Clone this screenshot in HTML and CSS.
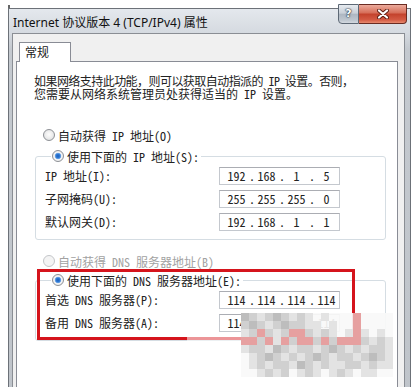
FILE: index.html
```html
<!DOCTYPE html>
<html>
<head>
<meta charset="utf-8">
<link rel="stylesheet" href="styles.css">
</head>
<body>
<div class="mark"></div>
<div class="window">
  <div class="titlebar"><span class="title">Internet 协议版本 4 (TCP/IPv4) 属性</span></div>
  <div class="caps">
    <div class="help">?</div>
    <div class="close"><svg width="12" height="10" viewBox="0 0 12 10"><path d="M2 1.5 L10 8.5 M10 1.5 L2 8.5" stroke="#5a1c12" stroke-width="4" stroke-linecap="round"/><path d="M2 1.5 L10 8.5 M10 1.5 L2 8.5" stroke="#fff" stroke-width="2.2" stroke-linecap="round"/></svg></div>
  </div>
  <div class="client">
    <div class="tab">常规</div>
    <div class="panel">
      <div class="desc">
        <div class="line tight">如果网络支持此功能，则可以获取自动指派的 IP 设置。否则，</div>
        <div class="line">您需要从网络系统管理员处获得适当的 IP 设置。</div>
      </div>
      <div class="opt first"><span class="radio"></span><span>自动获得 IP 地址(O)</span></div>
      <fieldset class="group g1">
        <legend class="opt"><span class="radio on"></span><span>使用下面的 IP 地址(S):</span></legend>
        <div class="row"><span class="lbl">IP 地址(I):</span><div class="ip"><span class="f">192</span><span class="dot">.</span><span class="f">168</span><span class="dot">.</span><span class="f">1</span><span class="dot">.</span><span class="f">5</span></div></div>
        <div class="row"><span class="lbl">子网掩码(U):</span><div class="ip"><span class="f">255</span><span class="dot">.</span><span class="f">255</span><span class="dot">.</span><span class="f">255</span><span class="dot">.</span><span class="f">0</span></div></div>
        <div class="row"><span class="lbl">默认网关(D):</span><div class="ip"><span class="f">192</span><span class="dot">.</span><span class="f">168</span><span class="dot">.</span><span class="f">1</span><span class="dot">.</span><span class="f">1</span></div></div>
      </fieldset>
      <div class="opt off"><span class="radio"></span><span>自动获得 DNS 服务器地址(B)</span></div>
      <fieldset class="group g2">
        <legend class="opt"><span class="radio on"></span><span>使用下面的 DNS 服务器地址(E):</span></legend>
        <div class="row"><span class="lbl">首选 DNS 服务器(P):</span><div class="ip"><span class="f">114</span><span class="dot">.</span><span class="f">114</span><span class="dot">.</span><span class="f">114</span><span class="dot">.</span><span class="f">114</span></div></div>
        <div class="row"><span class="lbl">备用 DNS 服务器(A):</span><div class="ip"><span class="f">114</span><span class="dot">.</span><span class="f">114</span><span class="dot">.</span><span class="f">114</span><span class="dot">.</span><span class="f">114</span></div></div>
      </fieldset>
    </div>
  </div>
</div>
<div class="redbox"></div>
<div class="blur"></div>
<div class="mosaic">
<i class="d"></i><i class="m"></i><i class="l"></i><i class="m"></i><i class="d"></i><i class="m"></i><i class="l"></i><i class="m"></i><i class="l"></i><i></i><i class="l"></i><i></i><i></i><i></i><i class="p"></i><i></i><i></i><i></i><i></i>
<i class="m"></i><i class="d"></i><i class="m"></i><i class="l"></i><i class="m"></i><i class="d"></i><i class="m"></i><i class="m"></i><i class="l"></i><i class="l"></i><i></i><i class="l"></i><i></i><i></i><i class="p"></i><i></i><i></i><i></i><i></i>
<i class="l"></i><i class="m"></i><i class="p"></i><i class="m"></i><i class="l"></i><i class="m"></i><i class="p"></i><i class="p"></i><i class="m"></i><i class="l"></i><i class="m"></i><i class="l"></i><i></i><i class="l"></i><i class="p"></i><i class="l"></i><i></i><i class="l"></i><i></i>
<i class="p"></i><i class="p"></i><i class="m"></i><i class="p"></i><i class="l"></i><i class="p"></i><i class="m"></i><i class="p"></i><i class="p"></i><i class="m"></i><i class="p"></i><i class="m"></i><i class="p"></i><i class="p"></i><i class="p"></i><i class="m"></i><i class="l"></i><i class="m"></i><i class="l"></i>
<i class="l"></i><i class="m"></i><i class="m"></i><i class="l"></i><i class="d"></i><i class="m"></i><i class="l"></i><i class="m"></i><i class="m"></i><i class="l"></i><i class="m"></i><i class="d"></i><i class="m"></i><i class="l"></i><i class="m"></i><i class="l"></i><i class="m"></i><i class="m"></i><i class="l"></i>
<i></i><i class="l"></i><i class="m"></i><i class="d"></i><i class="m"></i><i class="l"></i><i class="m"></i><i class="l"></i><i class="m"></i><i class="d"></i><i class="m"></i><i class="l"></i><i class="m"></i><i class="m"></i><i class="l"></i><i class="m"></i><i class="d"></i><i class="m"></i><i class="l"></i>
<i></i><i class="l"></i><i class="m"></i><i class="l"></i><i class="m"></i><i class="m"></i><i class="l"></i><i class="d"></i><i class="m"></i><i class="l"></i><i class="m"></i><i class="l"></i><i class="l"></i><i class="m"></i><i class="m"></i><i class="l"></i><i class="m"></i><i class="l"></i><i class="l"></i>
<i></i><i></i><i class="l"></i><i class="m"></i><i class="l"></i><i class="m"></i><i></i><i class="l"></i><i class="m"></i><i class="l"></i><i></i><i class="l"></i><i class="m"></i><i class="l"></i><i></i><i class="l"></i><i class="l"></i><i></i><i></i>
</div>
</body>
</html>
```

FILE: styles.css
```css
* { box-sizing: border-box; }
html, body { margin: 0; padding: 0; }
body {
  width: 419px;
  height: 387px;
  overflow: hidden;
  position: relative;
  background: #fff;
  font-family: "Noto Sans Mono CJK SC", "Noto Sans CJK SC", sans-serif;
  font-size: 12px;
  color: #222;
}
.mark {
  position: absolute;
  left: 8px;
  top: 5px;
  width: 2px;
  height: 3px;
  background: #666;
}
.window {
  position: relative;
  margin: 8px 0 0 8px;
  width: 403px;
  height: 400px;
  border: 1px solid #6c7178;
  border-bottom: none;
  background: linear-gradient(#e4e8ed, #d5dae0 24px, #c4c9cf 40px, #bfc4ca);
  padding: 0 5px 0 3px;
  display: flex;
  flex-direction: column;
}
.titlebar {
  height: 24px;
  display: flex;
  align-items: center;
  padding-left: 1px;
  padding-top: 2px;
}
.title {
  font-family: "Noto Sans", "Noto Sans CJK SC", sans-serif;
  font-size: 12px;
  color: #111;
}
.caps {
  position: absolute;
  right: 3px;
  top: -5px;
  display: flex;
}
.help {
  width: 21px;
  height: 20px;
  border: 1px solid #5d6875;
  border-radius: 0 0 0 4px;
  background: linear-gradient(#e6eaef, #c9d0d8 45%, #aeb7c2 52%, #bfc7d0 85%, #d3d9e0);
  color: #fff;
  font-family: "DejaVu Sans", sans-serif;
  font-weight: bold;
  font-size: 11px;
  line-height: 18px;
  text-align: center;
  text-shadow: 0 0 1px #2b3540, 0 0 1px #2b3540, 0 0 2px #2b3540;
}
.close {
  width: 48px;
  height: 20px;
  border: 1px solid #6a2b22;
  border-left: none;
  border-radius: 0 0 4px 0;
  background: linear-gradient(#ecab9c, #d7705b 42%, #c4432d 52%, #d35a43 82%, #e88a6f);
  display: flex;
  align-items: center;
  justify-content: center;
}
.close svg { display: block; }
.client {
  flex: 1;
  display: flex;
  flex-direction: column;
  border: 1px solid #8a8e94;
  border-bottom: none;
  background: #f0f0f0;
  padding: 8px 6px 0 3px;
}
.tab {
  position: relative;
  z-index: 1;
  align-self: flex-start;
  margin-left: 3px;
  margin-bottom: -1px;
  width: 52px;
  height: 20px;
  border: 1px solid #898c95;
  border-bottom: none;
  background: #fff;
  padding-left: 5px;
  line-height: 18px;
}
.panel {
  flex: 1;
  border: 1px solid #898c95;
  border-bottom: none;
  background: #fff;
  padding-top: 12px;
}
.desc {
  margin: 0 0 0 17px;
  white-space: nowrap;
}
.line {
  height: 13px;
  line-height: 13px;
}
.line.tight { letter-spacing: -0.55px; }
.opt {
  display: flex;
  align-items: center;
  gap: 3px;
  height: 16px;
  white-space: nowrap;
}
.opt.first { margin: 27px 0 0 26px; }
.opt.off { margin: 13px 0 0 26px; color: #a2a2a2; }
.radio {
  width: 12px;
  height: 12px;
  border-radius: 50%;
  border: 1px solid #8d9095;
  background: radial-gradient(circle at 50% 45%, #fdfdfd 0, #f0f0f0 40%, #d6d8db 100%);
  flex: none;
}
.radio.on {
  background: radial-gradient(circle at 50% 50%, #1d5fb8 0, #2f7ad6 2px, #7fb0e8 3px, #f5f5f5 3.6px, #e0e2e5 100%);
}
.opt.off .radio {
  border-color: #c4c6c9;
  background: #f4f4f4;
}
.group {
  margin: 5px 0 0 18px;
  padding: 0 0 6px 9px;
  width: 351px;
  min-width: 0;
  border: 1px solid #d5dde3;
  border-radius: 3px;
}
.group.g2 { margin-top: 3px; }
.group legend {
  margin-left: 6px;
  padding: 0 2px 0 1px;
}
.row {
  display: flex;
  align-items: center;
  height: 23px;
  white-space: nowrap;
}
.lbl { width: 174px; }
.ip {
  display: flex;
  align-items: center;
  width: 121px;
  height: 18px;
  border: 1px solid #c4c8ce;
  border-top-color: #abadb3;
  padding-left: 4px;
  background: #fff;
  color: #222;
}
.f { width: 25px; text-align: center; }
.dot { width: 5px; text-align: center; }
.redbox {
  position: absolute;
  left: 37px;
  top: 269px;
  width: 318px;
  height: 71px;
  border: 3px solid #d5141c;
}
.blur {
  position: absolute;
  left: 187px;
  top: 334px;
  width: 54px;
  height: 10px;
  background: rgba(255, 255, 255, 0.55);
}
.mosaic {
  position: absolute;
  left: 241px;
  top: 313px;
  width: 152px;
  height: 64px;
  display: grid;
  grid-template-columns: repeat(19, 8px);
  grid-template-rows: repeat(8, 8px);
  background: rgba(248, 248, 248, 0.92);
}
.mosaic i { display: block; }
.mosaic .l { background: #e3e3e3; }
.mosaic .m { background: #d0d0d0; }
.mosaic .d { background: #bdbdbd; }
.mosaic .p { background: #e6a0a0; }
```
